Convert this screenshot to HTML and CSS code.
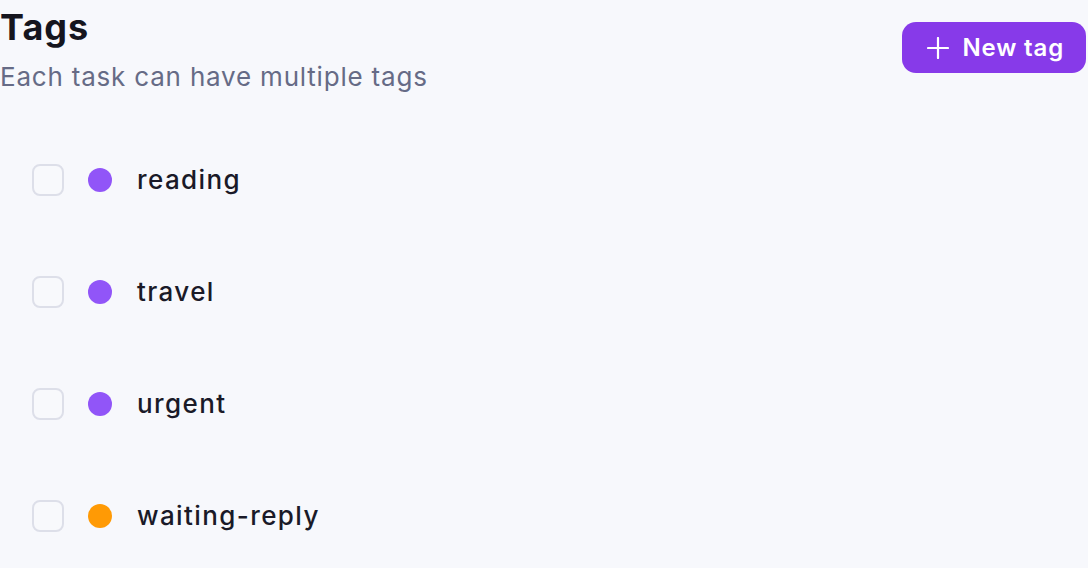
FILE: index.html
```html
<!DOCTYPE html>
<html lang="en">
<head>
<meta charset="utf-8">
<title>Tags</title>
<link rel="stylesheet" href="styles.css">
</head>
<body>
<div class="page">
  <header class="header">
    <div class="titles">
      <h1 class="title">Tags</h1>
      <p class="subtitle">Each task can have multiple tags</p>
    </div>
    <button class="new-btn" type="button">
      <svg class="plus" viewBox="0 0 22 22" width="22" height="22" aria-hidden="true">
        <path d="M11 1V21M1 11H21" stroke="#fff" stroke-width="2.2" stroke-linecap="round" fill="none"/>
      </svg>
      <span>New tag</span>
    </button>
  </header>
  <ul class="tag-list">
    <li class="tag-row"><span class="check"></span><span class="dot dot-purple"></span><span class="tag-name">reading</span></li>
    <li class="tag-row"><span class="check"></span><span class="dot dot-purple"></span><span class="tag-name">travel</span></li>
    <li class="tag-row"><span class="check"></span><span class="dot dot-purple"></span><span class="tag-name">urgent</span></li>
    <li class="tag-row"><span class="check"></span><span class="dot dot-orange"></span><span class="tag-name">waiting-reply</span></li>
  </ul>
</div>
</body>
</html>
```
FILE: styles.css
```css
html, body {
  margin: 0;
  padding: 0;
  background: #f7f8fc;
}
body {
  font-family: Inter, "Noto Sans", sans-serif;
  color: #17171f;
}
.page {
  padding: 0 2px 0 0;
}
.header {
  display: flex;
  justify-content: space-between;
  align-items: flex-start;
}
.title {
  margin: 5px 0 0 0;
  font-size: 36px;
  line-height: 44px;
  font-weight: 700;
  letter-spacing: 1px;
  color: #15151e;
}
.subtitle {
  margin: 12px 0 0 0;
  font-size: 26px;
  line-height: 32px;
  font-weight: 400;
  letter-spacing: 0.8px;
  color: #666b86;
}
.new-btn {
  margin-top: 22px;
  height: 51px;
  display: flex;
  align-items: center;
  gap: 13px;
  padding: 0 22px 0 25px;
  border: none;
  border-radius: 14px;
  background: #873ae9;
  color: #fff;
  font-family: inherit;
  font-size: 24px;
  font-weight: 600;
  letter-spacing: 0.85px;
}
.plus {
  display: block;
}
.tag-list {
  list-style: none;
  margin: 31px 0 0 0;
  padding: 0;
}
.tag-row {
  height: 112px;
  display: flex;
  align-items: center;
  padding-left: 32px;
}
.check {
  width: 32px;
  height: 32px;
  box-sizing: border-box;
  border: 2px solid #dddfe9;
  border-radius: 8px;
  background: #f8f9fc;
}
.dot {
  width: 24px;
  height: 24px;
  border-radius: 50%;
  margin-left: 24px;
}
.dot-purple { background: #9155f8; }
.dot-orange { background: #ff9a05; }
.tag-name {
  margin-left: 25px;
  font-size: 26px;
  line-height: 32px;
  font-weight: 500;
  letter-spacing: 1.4px;
  color: #1a1a28;
}
```
